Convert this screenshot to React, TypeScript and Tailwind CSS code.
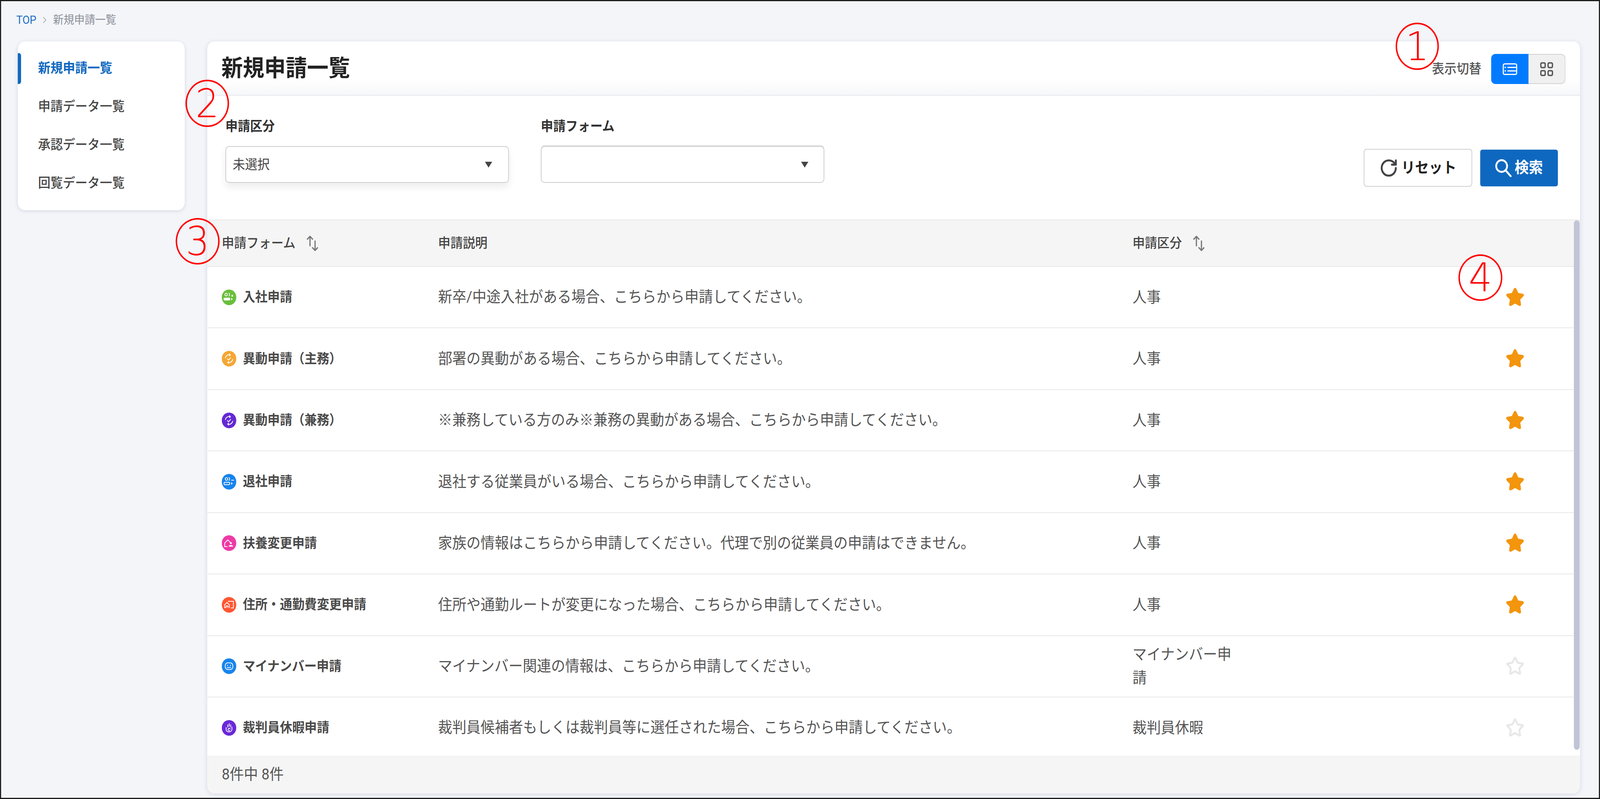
import { ChevronRight, RotateCw, Star } from 'lucide-react'
import type { ReactNode } from 'react'

const W = { stroke: 'white', strokeWidth: 2, fill: 'none', strokeLinecap: 'round', strokeLinejoin: 'round' } as const

const swapArrows = (
  <g {...W}>
    <path d="M10 18a10 10 0 0 1 13-7.5" />
    <path d="M30 22a10 10 0 0 1-13 7.5" />
    <path d="M21 8l3 2.5-3 2.5" />
    <path d="M19 32l-3-2.5 3-2.5" />
    <path d="M15.5 20.5l3 3 6-6" />
  </g>
)

const icons: Record<string, ReactNode> = {
  join: (
    <>
      <circle cx="12" cy="13" r="3.4" fill="none" stroke="white" strokeWidth="2" />
      <rect x="5" y="21" width="18" height="7" rx="3" fill="white" />
      <path d="M20 9.5c2 1 2 6 0 7" {...W} />
      <circle cx="29" cy="16" r="2.4" fill="white" />
      <path d="M26 21l4 3.5-4 3.5z" fill="white" />
    </>
  ),
  leave: (
    <>
      <circle cx="13" cy="13" r="3.4" {...W} />
      <rect x="6" y="21.5" width="16" height="6" rx="3" {...W} />
      <path d="M20 9.5c2 1 2 6 0 7" {...W} />
      <path d="M27 16h6" {...W} />
      <path d="M26 21l4 3.5-4 3.5z" fill="white" />
    </>
  ),
  family: (
    <>
      <path d="M8 29v-9l8.5-8 7 6" {...W} />
      <path d="M8 29h7" {...W} />
      <circle cx="25" cy="20" r="2.6" fill="white" />
      <path d="M19 29c0-3 3-4 6-4s6 1 6 4z" fill="white" />
    </>
  ),
  address: (
    <>
      <path d="M8 27v-7l6.5-6 6.5 6v7" {...W} />
      <path d="M8 27h4v-4h5v4" {...W} />
      <path d="M18 11h14v17h-6" {...W} />
    </>
  ),
  number: (
    <>
      <rect x="9.5" y="11.5" width="21" height="17" rx="7" {...W} />
      <circle cx="16" cy="18" r="1.4" fill="white" />
      <circle cx="24" cy="18" r="1.4" fill="white" />
      <path d="M15 23.5h10" {...W} />
    </>
  ),
  jury: (
    <>
      <path d="M12 19v6a7 7 0 0 0 7 5h3a7 7 0 0 0 6-7v-5" {...W} />
      <path d="M16.5 18v-6M20.5 16v-7M24.5 18v-6" {...W} />
      <path d="M23 22.5a3 3 0 1 0-1 4" {...W} />
    </>
  ),
}

const rows = [
  { name: '入社申請', desc: '新卒/中途入社がある場合、こちらから申請してください。', kind: '人事', color: '#69bf3c', icon: icons.join, fav: true },
  { name: '異動申請（主務）', desc: '部署の異動がある場合、こちらから申請してください。', kind: '人事', color: '#f5a633', icon: swapArrows, fav: true },
  { name: '異動申請（兼務）', desc: '※兼務している方のみ※兼務の異動がある場合、こちらから申請してください。', kind: '人事', color: '#6428d4', icon: swapArrows, fav: true },
  { name: '退社申請', desc: '退社する従業員がいる場合、こちらから申請してください。', kind: '人事', color: '#1784ec', icon: icons.leave, fav: true },
  { name: '扶養変更申請', desc: '家族の情報はこちらから申請してください。代理で別の従業員の申請はできません。', kind: '人事', color: '#ee3aa6', icon: icons.family, fav: true },
  { name: '住所・通勤費変更申請', desc: '住所や通勤ルートが変更になった場合、こちらから申請してください。', kind: '人事', color: '#ff5733', icon: icons.address, fav: true },
  { name: 'マイナンバー申請', desc: 'マイナンバー関連の情報は、こちらから申請してください。', kind: 'マイナンバー申請', color: '#1784ec', icon: icons.number, fav: false },
  { name: '裁判員休暇申請', desc: '裁判員候補者もしくは裁判員等に選任された場合、こちらから申請してください。', kind: '裁判員休暇', color: '#6a28d8', icon: icons.jury, fav: false },
]

function SortIcon() {
  return (
    <svg width="32" height="40" viewBox="0 0 32 40" fill="none" stroke="#7a7a7a" strokeWidth="3.4" strokeLinecap="round" strokeLinejoin="round">
      <path d="M10 2v24M3 9l7-7 7 7" />
      <path d="M24 14v24M17 31l7 7 7-7" />
    </svg>
  )
}

function Caret() {
  return (
    <svg width="20" height="15" viewBox="0 0 20 15" className="ml-auto">
      <path d="M0 0h20l-10 15z" fill="#444" />
    </svg>
  )
}

function Mark({ className, children }: { className: string; children: string }) {
  return (
    <div className={`absolute flex items-center justify-center rounded-[50%] border-[4px] border-[#f00] text-[#f00] font-['DejaVu_Sans',sans-serif] font-extralight text-[102px] leading-none ${className}`}>
      {children}
    </div>
  )
}

export default function App() {
  // the browser window can come out narrower than the 4408px design
  const fit = Math.min(1, window.innerWidth / 4408)

  return (
    <div className="w-screen h-screen overflow-hidden">
      <div
        className="relative w-[4408px] h-[2045px] origin-top-left overflow-hidden border-[3px] border-[#1c1c1c] bg-[#f3f5f9] font-['Roboto','Noto_Sans_CJK_JP',sans-serif]"
        style={{ transform: `scaleX(${fit})` }}
      >
        {/* breadcrumb */}
        <div className="mt-[28px] mb-[35px] h-[40px] pl-[42px] flex items-center gap-[9px] text-[29px] leading-none">
          <span className="text-[#1c6fc4]">TOP</span>
          <ChevronRight size={28} strokeWidth={1.5} className="text-[#9a9a9a]" />
          <span className="text-[#8b8f99]">新規申請一覧</span>
        </div>

        <div className="flex items-start pl-[46px] gap-[62px]">
          {/* side menu */}
          <nav className="relative w-[460px] h-[432px] shrink-0 rounded-[20px] bg-white pt-[19px] shadow-[0_2px_10px_rgba(60,70,110,0.16)] text-[34px] font-medium text-[#444]">
            <div className="absolute left-0 top-[30px] w-[9px] h-[79px] rounded-r-[6px] bg-[#0f68bf]" />
            <div className="h-[98px] pl-[56px] flex items-center font-bold text-[#0f68bf]">新規申請一覧</div>
            <div className="h-[98px] pl-[56px] flex items-center">申請データ一覧</div>
            <div className="h-[98px] pl-[56px] flex items-center">承認データ一覧</div>
            <div className="h-[98px] pl-[56px] flex items-center">回覧データ一覧</div>
          </nav>

          {/* main card */}
          <main className="relative w-[3782px] h-[1925px] shrink-0 overflow-hidden rounded-[20px] bg-white shadow-[0_2px_12px_rgba(60,70,110,0.16)]">
            <header className="h-[139px] pl-[39px] pr-[40px] flex items-center justify-between border-b-[2px] border-[#e6e8ee] bg-linear-to-b from-white from-70% to-[#f6f7f9]">
              <h1 className="text-[59px] font-bold leading-none text-[#222]">新規申請一覧</h1>
              <div className="flex items-center gap-[27px] pt-[4px]">
                <span className="text-[34px] font-medium text-[#555]">表示切替</span>
                <div className="flex h-[77px] w-[205px] overflow-hidden rounded-[12px]">
                  <div className="w-[103px] bg-[#007bff] flex items-center justify-center">
                    <svg width="40" height="30" viewBox="0 0 40 30">
                      <rect x="1.5" y="1.5" width="37" height="27" rx="4" fill="none" stroke="white" strokeWidth="3" />
                      <path d="M13 10.5h24M13 19.5h24" stroke="white" strokeWidth="3" />
                      <path d="M5 10.5h4M5 19.5h4" stroke="white" strokeWidth="3" />
                    </svg>
                  </div>
                  <div className="flex-1 bg-[#f0f0f0] border-2 border-l-0 border-[#d2d2d2] rounded-r-[12px] flex items-center justify-center">
                    <svg width="36" height="36" viewBox="0 0 36 36" fill="none" stroke="#555" strokeWidth="3.6">
                      <rect x="2" y="2" width="12" height="12" rx="3" />
                      <rect x="22" y="2" width="12" height="12" rx="3" />
                      <rect x="2" y="22" width="12" height="12" rx="3" />
                      <rect x="22" y="22" width="12" height="12" rx="3" />
                    </svg>
                  </div>
                </div>
              </div>
            </header>

            {/* filters */}
            <section className="h-[317px] pl-[50px] pr-[61px] flex items-start">
              <div className="w-[781px] mr-[88px] pt-[58px]">
                <div className="h-[40px] flex items-center text-[34px] font-bold text-[#333]">申請区分</div>
                <div className="mt-[31px] h-[94px] pl-[18px] pr-[44px] flex items-center rounded-[10px] border-2 border-[#cdcdcd] bg-white text-[34px] text-[#444] shadow-[0_12px_20px_rgba(0,0,0,0.07)]">
                  未選択
                  <Caret />
                </div>
              </div>
              <div className="w-[781px] pt-[58px]">
                <div className="h-[40px] flex items-center text-[34px] font-bold text-[#333]">申請フォーム</div>
                <div className="mt-[31px] h-[94px] pl-[18px] pr-[42px] flex items-center rounded-[10px] border-2 border-[#cdcdcd] bg-white text-[34px] shadow-[0_-3px_0_#e6e6e6]">
                  <Caret />
                </div>
              </div>
              <div className="ml-auto mt-[136px] flex items-center gap-[22px]">
                <button className="w-[299px] h-[97px] flex items-center justify-center gap-[8px] rounded-[8px] border-2 border-[#d0d0d0] bg-white text-[38px] font-bold text-[#222]">
                  <RotateCw size={52} strokeWidth={2.4} className="text-[#444]" />
                  リセット
                </button>
                <button className="w-[214px] h-[94px] flex items-center justify-center gap-[8px] rounded-[6px] bg-[#0f68bf] text-[39px] font-bold text-white">
                  <svg width="46" height="46" viewBox="0 0 46 46" fill="none" stroke="white" strokeWidth="5" strokeLinecap="round">
                    <circle cx="18" cy="18" r="15" />
                    <path d="M29 29l14 15" />
                  </svg>
                  検索
                </button>
              </div>
            </section>

            {/* table head */}
            <div className="h-[121px] grid grid-cols-[636px_1913px_1fr] items-center border-y-[2px] border-[#e8e8e8] bg-[#f5f5f5] text-[34px] font-medium text-[#444]">
              <div className="pl-[40px] flex items-center gap-[30px]">申請フォーム<SortIcon /></div>
              <div>申請説明</div>
              <div className="flex items-center gap-[30px]">申請区分<SortIcon /></div>
            </div>

            {/* table body */}
            <div className="h-[1251px] overflow-hidden mr-[18px]">
              {rows.map((r) => (
                <div key={r.name} className="h-[157.43px] grid grid-cols-[636px_1913px_1fr] items-center border-b-[2px] border-[#e8e8e8]">
                  <div className="pl-[40px] flex items-center gap-[18px] text-[34px] font-bold text-[#4a4a4a]">
                    <svg width="40" height="40" viewBox="0 0 40 40" className="shrink-0">
                      <circle cx="20" cy="20" r="20" fill={r.color} />
                      {r.icon}
                    </svg>
                    {r.name}
                  </div>
                  <div className="text-[39px] text-[#555]">{r.desc}</div>
                  <div className="flex items-center justify-between pr-[135px]">
                    <div className="w-[290px] text-[39px] leading-[60px] text-[#555]">{r.kind}</div>
                    <Star
                      size={52}
                      strokeWidth={2.4}
                      className={r.fav ? 'text-[#f3950d] fill-[#f3950d]' : 'text-[#e8e8e8] fill-white'}
                    />
                  </div>
                </div>
              ))}
            </div>

            {/* footer */}
            <div className="h-[97px] pl-[40px] flex items-center bg-[#f5f5f5] text-[39px] text-[#555]">8件中 8件</div>

            {/* overlay scrollbar */}
            <div className="absolute right-[1px] top-[458px] w-[16px] h-[1355px] rounded-[8px] bg-[#c0c4d6]" />
          </main>
        </div>

        <Mark className="left-[3842px] top-[55px] w-[119px] h-[121px]">1</Mark>
        <Mark className="left-[508px] top-[201px] w-[120px] h-[121px]">2</Mark>
        <Mark className="left-[481px] top-[555px] w-[121px] h-[119px]">3</Mark>
        <Mark className="left-[4015px] top-[648px] w-[121px] h-[119px]">4</Mark>
      </div>
    </div>
  )
}
